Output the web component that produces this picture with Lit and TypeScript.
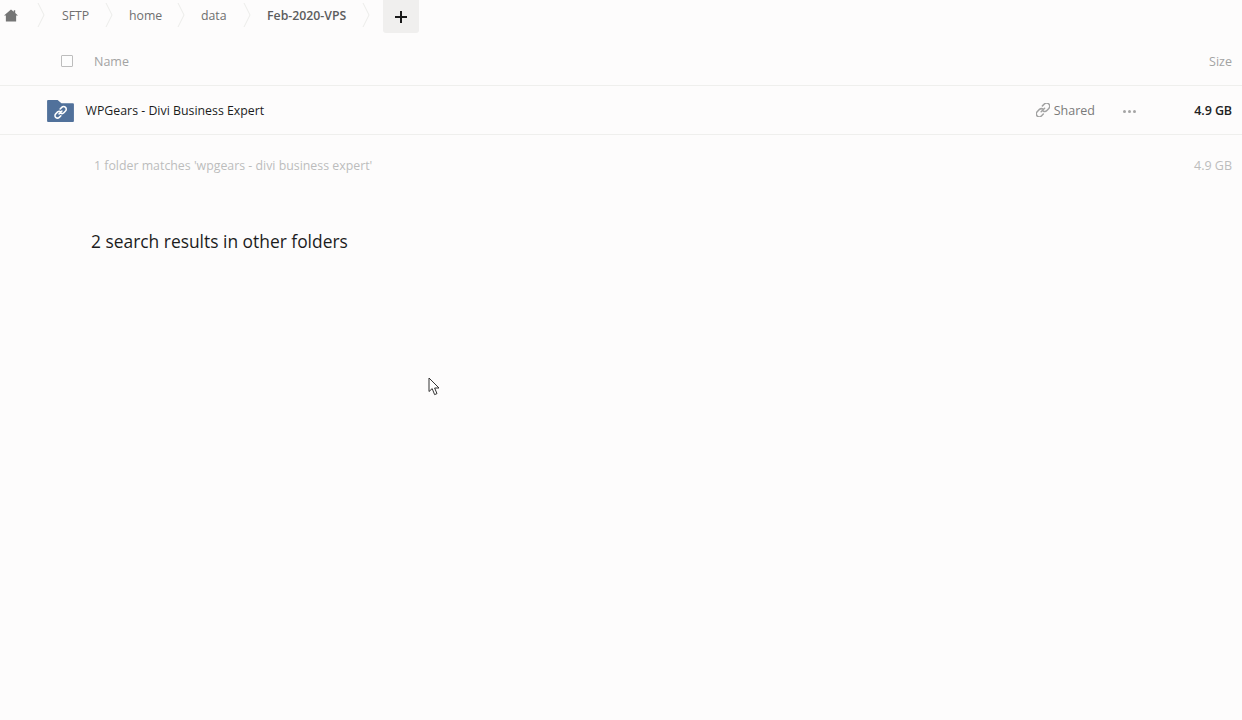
import { LitElement, html, css, svg } from "lit";
import { customElement } from "lit/decorators.js";

const chevron = svg`<svg class="chev" width="8" height="26" viewBox="0 0 8 26"><path d="M1 1 L7 13 L1 25" fill="none" stroke="#ececea" stroke-width="1"/></svg>`;
const linkPath = "M6.5 9.5 L9.5 6.5 M7.6 4.4 L9.3 2.7 a2.6 2.6 0 0 1 3.9 3.9 L11.5 8.4 a2.6 2.6 0 0 1 -3.4 .3 M8.4 7.6 a2.6 2.6 0 0 0 -3.4 -.1 L3 9.5 a2.6 2.6 0 0 0 3.7 3.7 L8.4 11.5";

@customElement("app-root")
export class AppRoot extends LitElement {
  static styles = css`
    :host {
      display: block;
      position: relative;
      width: 1242px;
      height: 720px;
      overflow: hidden;
      background: #fdfcfc;
      font-family: "Open Sans", "Noto Sans", sans-serif;
      font-size: 12.5px;
      color: #222;
    }
    .crumbs { display: flex; align-items: center; height: 33px; }
    .home { width: 37px; padding-left: 4px; box-sizing: border-box; display: flex; margin-top: -4px; }
    .chev { flex: none; margin-top: -3px; }
    .crumb { color: #6f6f6f; line-height: 33px; margin-top: -2px; font-size: 12.3px; }
    .c1 { margin-left: 17px; width: 43px; }
    .c2 { margin-left: 16px; width: 48px; }
    .c3 { margin-left: 16px; width: 42px; }
    .c4 { margin-left: 16px; width: 95px; font-weight: 600; color: #5c5c5c; }
    .plus {
      margin-left: 13px;
      width: 36px;
      height: 33px;
      background: #f0efee;
      border-radius: 0 0 3px 3px;
      display: flex;
      align-items: center;
      justify-content: center;
    }
    .head {
      display: flex;
      align-items: center;
      height: 53px;
      box-sizing: border-box;
      border-bottom: 1px solid #efefed;
      color: #a3a3a3;
      padding: 4px 10px 0 61px;
    }
    .check { width: 10px; height: 10px; border: 1px solid #bdbdbd; background: #fdfdfd; border-radius: 1px; }
    .name-h { margin-left: 21px; flex: 1; }
    .row {
      display: flex;
      align-items: center;
      height: 49px;
      box-sizing: border-box;
      border-bottom: 1px solid #efefed;
      padding: 0 10px 0 47px;
    }
    .folder { display: flex; flex: none; }
    .fname { margin-left: 11.5px; flex: 1; color: #1c1c1c; font-size: 12.35px; }
    .shared { display: flex; align-items: center; gap: 4px; color: #7a7a7a; width: 59px; }
    .dots { display: flex; gap: 2px; margin-left: 28px; margin-top: 2px; }
    .dots i { width: 3px; height: 3px; border-radius: 50%; background: #a5a5a5; display: block; }
    .fsize { width: 96px; text-align: right; font-weight: 600; color: #222; letter-spacing: -0.1px; }
    .summary {
      display: flex;
      justify-content: space-between;
      align-items: center;
      height: 60px;
      padding: 0 10px 0 94px;
      font-size: 12.35px;
      color: #bcbcbc;
    }
    .summary span:last-child { font-size: 12.5px; }
    h2 {
      margin: 34px 0 0 91px;
      font-size: 17.4px;
      font-weight: 400;
      line-height: 25px;
      color: #1c1c1c;
    }
    .cursor { position: absolute; left: 428px; top: 377px; display: block; }
  `;

  render() {
    return html`
      <div class="crumbs">
        <div class="home">
          <svg width="14" height="14" viewBox="0 0 15 14"><path d="M7.5 1 L10.5 3.6 V2 H12 V4.9 L15 7.5 H13 V14 H2 V7.5 H0 Z" fill="#757575"/></svg>
        </div>
        ${chevron}<span class="crumb c1">SFTP</span>
        ${chevron}<span class="crumb c2">home</span>
        ${chevron}<span class="crumb c3">data</span>
        ${chevron}<span class="crumb c4">Feb-2020-VPS</span>
        ${chevron}
        <div class="plus">
          <svg width="12" height="12" viewBox="0 0 12 12"><path d="M6 0 V12 M0 6 H12" stroke="#1a1a1a" stroke-width="2"/></svg>
        </div>
      </div>
      <div class="head">
        <span class="check"></span>
        <span class="name-h">Name</span>
        <span>Size</span>
      </div>
      <div class="row">
        <svg class="folder" width="27" height="23" viewBox="0 0 28 24">
          <path d="M0 2 a1 1 0 0 1 1 -1 H11 L15 4.5 H27 a1 1 0 0 1 1 1 V23 a1 1 0 0 1 -1 1 H1 a1 1 0 0 1 -1 -1 Z" fill="#51719b"/>
          <g transform="translate(6 6)"><path d="${linkPath}" fill="none" stroke="#fff" stroke-width="1.6" stroke-linecap="round"/></g>
        </svg>
        <span class="fname">WPGears - Divi Business Expert</span>
        <span class="shared">
          <svg width="14" height="14" viewBox="2 2 12 12"><path d="${linkPath}" fill="none" stroke="#a2a2a2" stroke-width="1.3" stroke-linecap="round"/></svg>
          <span>Shared</span>
        </span>
        <span class="dots"><i></i><i></i><i></i></span>
        <span class="fsize">4.9 GB</span>
      </div>
      <div class="summary">
        <span>1 folder matches 'wpgears - divi business expert'</span>
        <span>4.9 GB</span>
      </div>
      <h2>2 search results in other folders</h2>
      <svg class="cursor" width="13" height="20" viewBox="0 0 13 20">
        <path d="M1 1 V14.5 L4.2 11.6 L6.6 17.6 L9 16.6 L6.6 11 H11 Z" fill="#fff" stroke="#333" stroke-width="1" stroke-linejoin="miter"/>
      </svg>
    `;
  }
}
